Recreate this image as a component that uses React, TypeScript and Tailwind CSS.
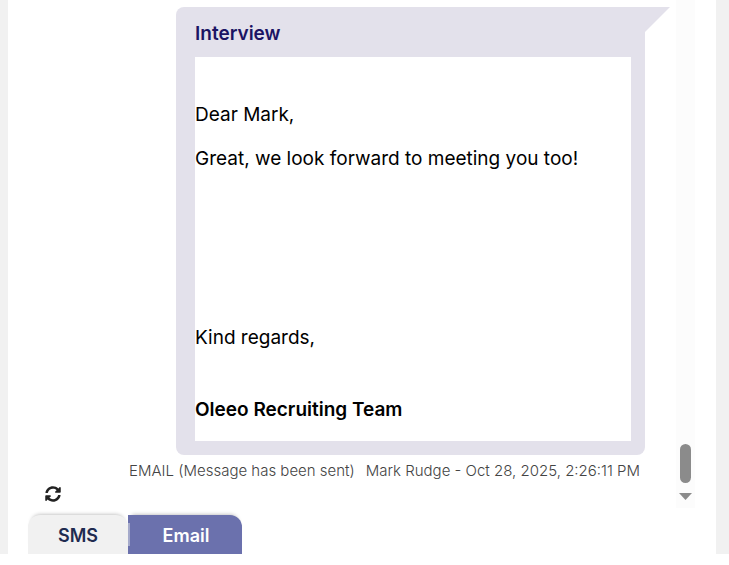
import React from "react";
import { FaSyncAlt } from "react-icons/fa";

function MessageBubble() {
  return (
    <article className="relative ml-[168px] mr-[31px] rounded-lg rounded-tr-none bg-[#e3e1eb] pl-[19px] pr-[14px] pb-[14px]">
      <svg
        className="absolute left-full top-0 h-[25px] w-[25px]"
        viewBox="0 0 25 25"
        aria-hidden="true"
      >
        <path d="M0 0H25L0 25Z" fill="#e3e1eb" />
      </svg>
      <h2 className="flex h-[50px] items-center pt-[5px] text-[19px] font-semibold text-[#1b1464]">
        Interview
      </h2>
      <div className="bg-white pt-[46px] pb-[19px] text-[19px] leading-6 text-black">
        <p className="mb-5">Dear Mark,</p>
        <p className="mb-[155px]">Great, we look forward to meeting you too!</p>
        <p className="mb-12">Kind regards,</p>
        <p className="font-semibold">Oleeo Recruiting Team</p>
      </div>
    </article>
  );
}

function Scrollbar() {
  return (
    <div
      className="flex h-[508px] w-[19px] flex-col items-center justify-end bg-[#fcfcfc] pb-2"
      aria-hidden="true"
    >
      <div className="mb-[10px] h-[39px] w-[11px] rounded-full bg-[#8b8b8b]" />
      <svg className="h-[7px] w-[13px]" viewBox="0 0 13 7">
        <path d="M0 0H13L6.5 7Z" fill="#8b8b8b" />
      </svg>
    </div>
  );
}

export default function App() {
  return (
    <div className="min-h-screen bg-white font-['Inter','Liberation_Sans',sans-serif]">
      <div className="bg-[#f1f1f1] pl-2 pr-[13px]">
        <main className="bg-white">
          <div className="flex pr-[21px]">
            <section className="min-w-0 flex-1 pt-[7px]">
              <MessageBubble />
              <p className="mr-9 mt-[6px] flex justify-end gap-[11px] whitespace-nowrap text-[15px] font-light leading-5 text-[#444444]">
                <span>EMAIL (Message has been sent)</span>
                <span>Mark Rudge - Oct 28, 2025, 2:26:11 PM</span>
              </p>
              <button
                type="button"
                aria-label="Refresh messages"
                className="ml-[37px] mt-[5px] block text-base text-[#222222]"
              >
                <FaSyncAlt />
              </button>
            </section>
            <Scrollbar />
          </div>
          <div className="mt-[7px] flex pl-5 text-lg" role="tablist">
            <button
              type="button"
              role="tab"
              aria-selected="false"
              className="h-[39px] w-[100px] rounded-t-xl bg-[#f1f1f1] pt-[3px] font-semibold text-[#1f2b50] shadow-[0_-4px_4px_-4px_#00000055]"
            >
              SMS
            </button>
            <button
              type="button"
              role="tab"
              aria-selected="true"
              className="flex h-[39px] w-[114px] items-center rounded-tr-xl bg-[#6b71ad] font-semibold text-white shadow-[0_-4px_4px_-4px_#00000055]"
            >
              <span className="h-[23px] w-[2px] bg-[#a5aacb]" />
              <span className="flex-1 pt-[3px]">Email</span>
            </button>
          </div>
        </main>
      </div>
    </div>
  );
}
